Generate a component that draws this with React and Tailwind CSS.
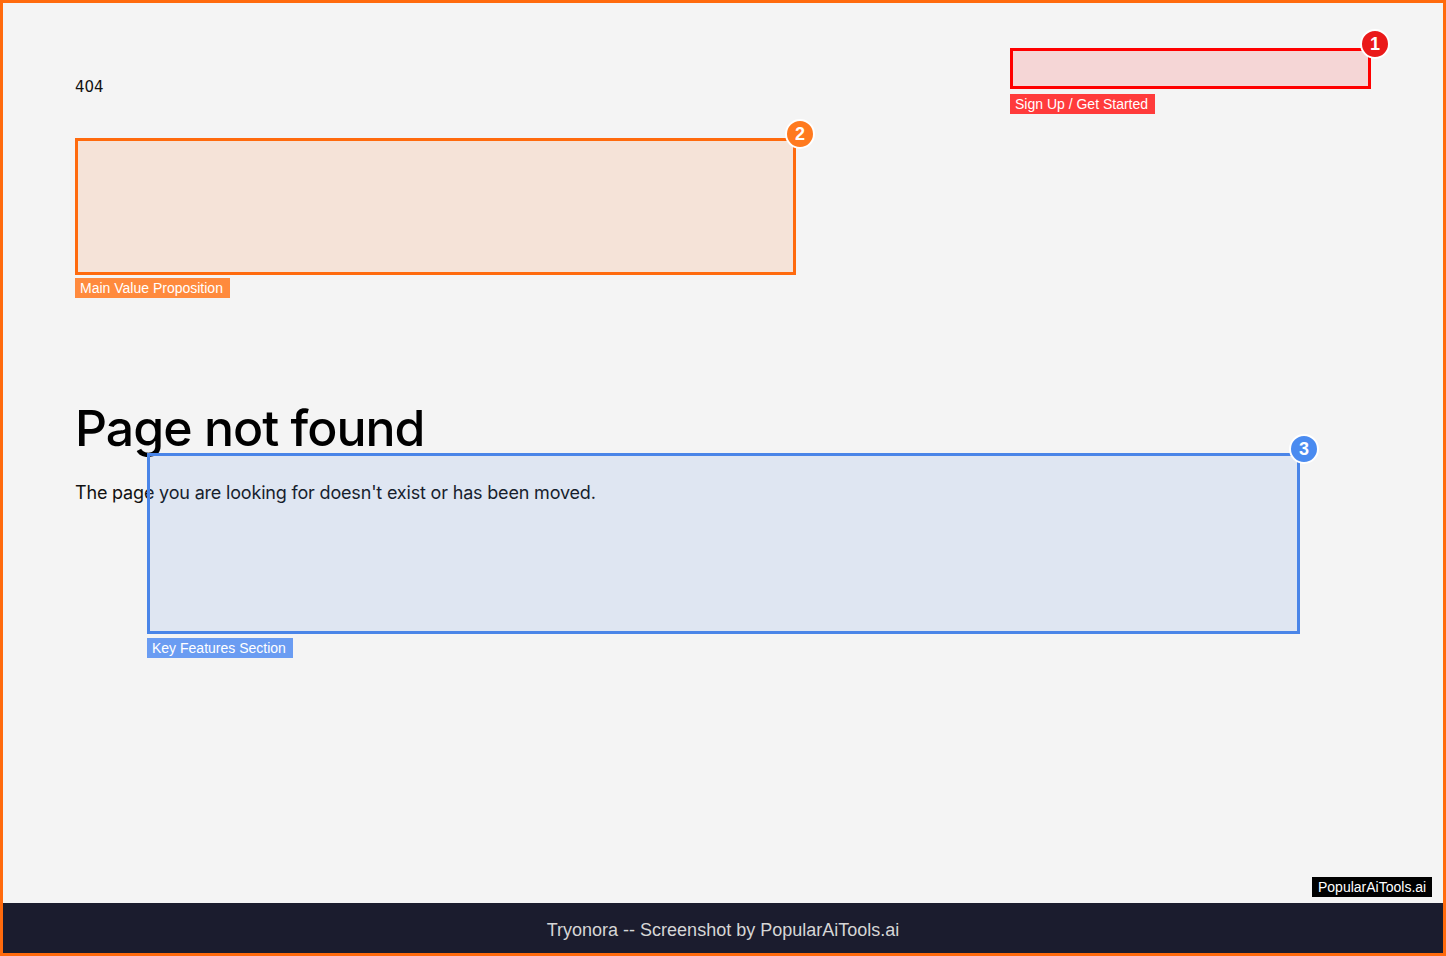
import React from 'react';

/**
 * 404 page of Tryonora with the annotation overlays of the screenshot
 */
const boxes = [
  {
    id: 1,
    label: 'Sign Up / Get Started',
    box: 'left-[1007px] top-[45px] w-[361px] h-[41px] border-[#ff0000] bg-[#ff0000]/12',
    badge: 'left-[1357px] top-[26px] bg-[#ea1a1a]',
    tag: 'left-[1007px] top-[91px] bg-[#ff3b3b]',
  },
  {
    id: 2,
    label: 'Main Value Proposition',
    box: 'left-[72px] top-[135px] w-[721px] h-[137px] border-[#ff6a0d] bg-[#ff6a0d]/12',
    badge: 'left-[782px] top-[116px] bg-[#ff7a1f]',
    tag: 'left-[72px] top-[275px] bg-[#ff8a3d]',
  },
  {
    id: 3,
    label: 'Key Features Section',
    box: 'left-[144px] top-[450px] w-[1153px] h-[181px] border-[#4a85e8] bg-[#4a85e8]/12',
    badge: 'left-[1286px] top-[431px] bg-[#4a8bf0]',
    tag: 'left-[144px] top-[635px] bg-[#6a9cf2]',
  },
];

const App = () => {
  return (
    <div className="h-[956px] w-[1446px] border-[3px] border-[#ff6a0d] bg-[#f4f4f4] flex flex-col overflow-hidden">
      {/* Page */}
      <div className="relative flex-1 pl-[72px] pt-[73px]">
        <div className="font-['DejaVu_Sans',sans-serif] text-[15px] leading-[22px] text-[#111]">404</div>

        <h1 className="mt-[305px] font-['Inter',sans-serif] text-[50px] leading-none font-medium tracking-[-0.02em] text-black">
          Page not found
        </h1>
        <p className="mt-[26px] font-['Inter',sans-serif] text-[18px] leading-[28px] tracking-[-0.01em] text-[#111]">
          The page you are looking for doesn't exist or has been moved.
        </p>

        {/* Annotations */}
        {boxes.map((b) => (
          <React.Fragment key={b.id}>
            <div className={`absolute border-[3px] ${b.box}`} />
            <div
              className={`absolute w-[30px] h-[30px] rounded-full border-2 border-white flex items-center justify-center font-['Liberation_Sans',sans-serif] text-[18px] font-bold text-white ${b.badge}`}
            >
              {b.id}
            </div>
            <div
              className={`absolute h-[20px] pl-[5px] pr-[7px] flex items-center font-['Liberation_Sans',sans-serif] text-[14px] text-white ${b.tag}`}
            >
              {b.label}
            </div>
          </React.Fragment>
        ))}

        <div className="absolute left-[1309px] top-[874px] h-[20px] px-[6px] flex items-center bg-black font-['Liberation_Sans',sans-serif] text-[14px] text-white">
          PopularAiTools.ai
        </div>
      </div>

      {/* Footer */}
      <div className="h-[50px] shrink-0 pt-[4px] bg-[#1b1c2e] flex items-center justify-center font-['Liberation_Sans',sans-serif] text-[18px] text-[#d6d6d6]">
        Tryonora -- Screenshot by PopularAiTools.ai
      </div>
    </div>
  );
};

export default App;
